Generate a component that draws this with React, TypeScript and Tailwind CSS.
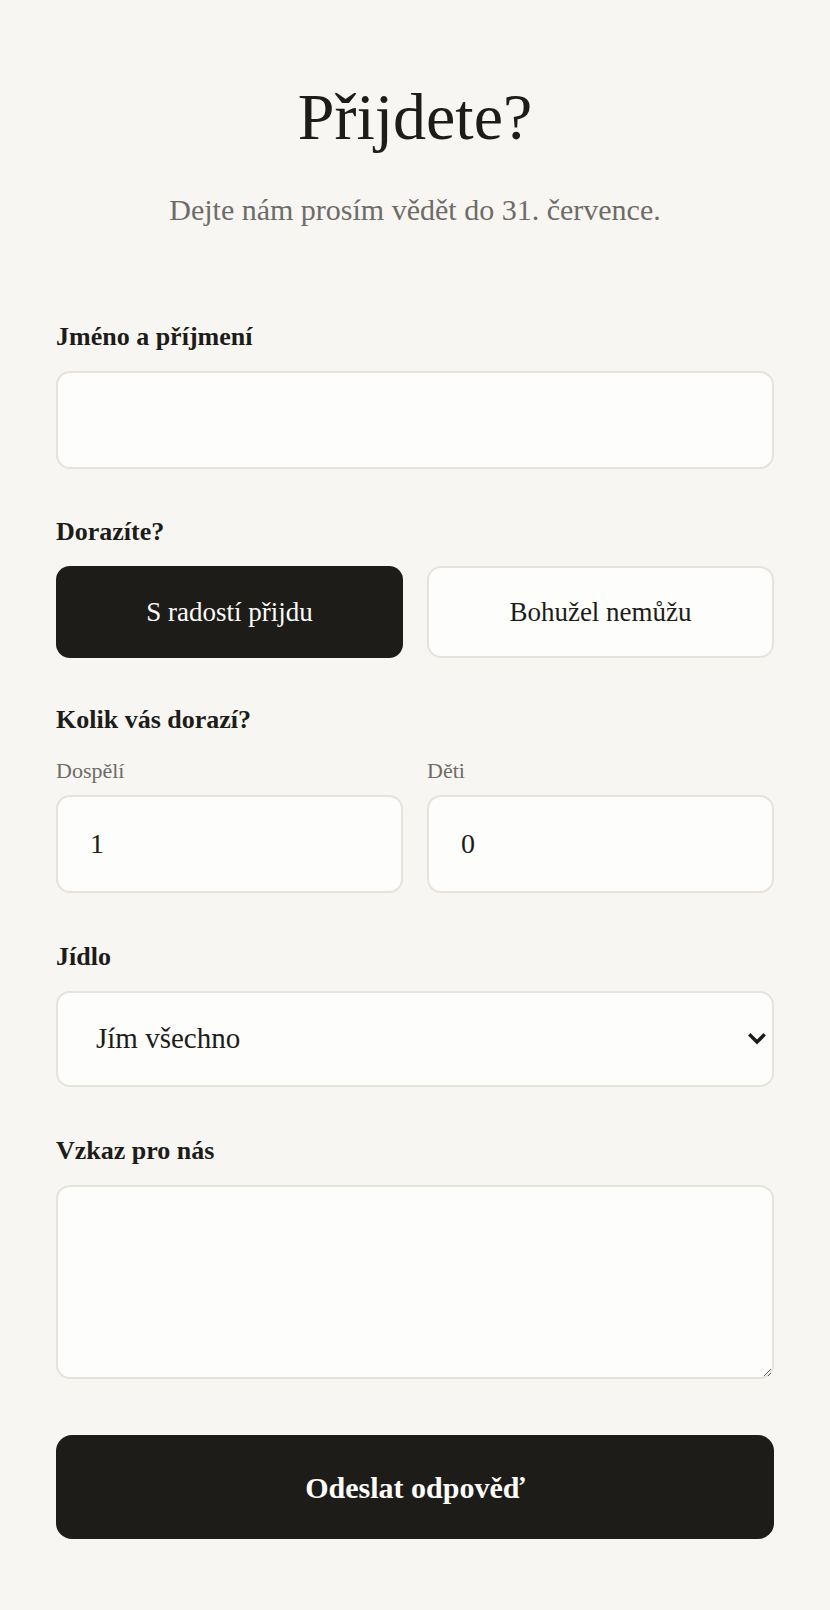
import React from "react";

const serif = { fontFamily: '"Liberation Serif", "DejaVu Serif", serif' };

const Label: React.FC<{ children: React.ReactNode; className?: string }> = ({ children, className = "" }) => (
  <label className={`block text-[26px] leading-[32px] font-bold text-[#1d1c19] mb-[18px] ${className}`}>{children}</label>
);

const fieldBase =
  "w-full rounded-[14px] border-2 border-[#e6e3dc] bg-[#fdfdfb] text-[#1d1c19] outline-none";

export default function App() {
  return (
    <div className="min-h-[1610px] w-full bg-[#f7f6f2]" style={serif}>
      <div className="px-14 pt-[84px] pb-16">
        <h1 className="text-center text-[66px] leading-[66px] font-normal text-[#1d1c19]">Přijdete?</h1>
        <p className="mt-10 text-center text-[30px] leading-[40px] text-[#6e6c67]">
          Dejte nám prosím vědět do 31. července.
        </p>

        <form className="mt-[91px]" onSubmit={(e) => e.preventDefault()}>
          <Label>Jméno a příjmení</Label>
          <input type="text" className={`${fieldBase} h-[98px] px-8 text-[28px]`} style={serif} />

          <Label className="mt-[47px]">Dorazíte?</Label>
          <div className="grid grid-cols-2 gap-6">
            <button
              type="button"
              className="h-[92px] rounded-[14px] bg-[#1d1c19] text-[#fdfdfb] text-[27px]"
              style={serif}
            >
              S radostí přijdu
            </button>
            <button
              type="button"
              className="h-[92px] rounded-[14px] border-2 border-[#e6e3dc] bg-[#fdfdfb] text-[#1d1c19] text-[27px]"
              style={serif}
            >
              Bohužel nemůžu
            </button>
          </div>

          <Label className="mt-[46px] !mb-[21px]">Kolik vás dorazí?</Label>
          <div className="grid grid-cols-2 gap-6">
            <div>
              <div className="text-[22px] leading-[28px] text-[#6e6c67] mb-[10px]">Dospělí</div>
              <input
                type="number"
                defaultValue={1}
                className={`${fieldBase} h-[98px] px-8 text-[28px]`}
                style={serif}
              />
            </div>
            <div>
              <div className="text-[22px] leading-[28px] text-[#6e6c67] mb-[10px]">Děti</div>
              <input
                type="number"
                defaultValue={0}
                className={`${fieldBase} h-[98px] px-8 text-[28px]`}
                style={serif}
              />
            </div>
          </div>

          <Label className="mt-12">Jídlo</Label>
          <div className="relative">
            <select
              className={`${fieldBase} h-[96px] pl-[38px] pr-12 text-[29px] appearance-none`}
              style={serif}
              defaultValue="all"
            >
              <option value="all">Jím všechno</option>
              <option value="veg">Vegetarián</option>
              <option value="vegan">Vegan</option>
            </select>
            <svg
              className="pointer-events-none absolute right-[8px] top-1/2 -translate-y-1/2"
              width="18"
              height="12"
              viewBox="0 0 18 12"
              fill="none"
            >
              <path d="M2.5 2.5 L9 9 L15.5 2.5" stroke="#1d1c19" strokeWidth="3.4" strokeLinecap="square" />
            </svg>
          </div>

          <Label className="mt-12">Vzkaz pro nás</Label>
          <textarea className={`${fieldBase} block h-[194px] px-8 py-6 text-[28px]`} style={serif} />

          <button
            type="submit"
            className="mt-14 h-[104px] w-full rounded-[16px] bg-[#1d1c19] text-[#fdfdfb] text-[30px] font-bold"
            style={serif}
          >
            Odeslat odpověď
          </button>
        </form>
      </div>
    </div>
  );
}
